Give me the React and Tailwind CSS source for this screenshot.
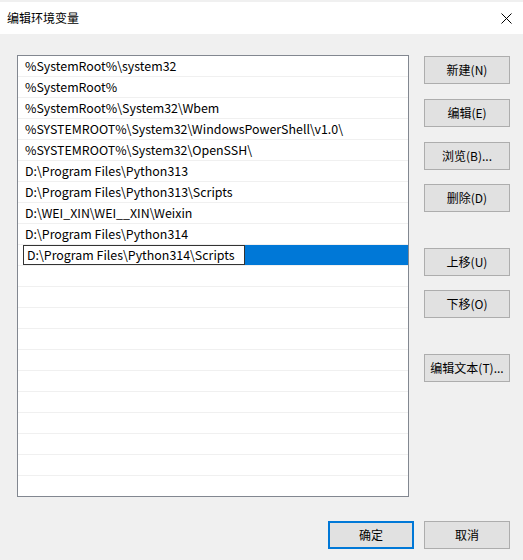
import React from 'react'

const paths = [
  '%SystemRoot%\\system32',
  '%SystemRoot%',
  '%SystemRoot%\\System32\\Wbem',
  '%SYSTEMROOT%\\System32\\WindowsPowerShell\\v1.0\\',
  '%SYSTEMROOT%\\System32\\OpenSSH\\',
  'D:\\Program Files\\Python313',
  'D:\\Program Files\\Python313\\Scripts',
  'D:\\WEI_XIN\\WEI__XIN\\Weixin',
  'D:\\Program Files\\Python314',
]

const editing = 'D:\\Program Files\\Python314\\Scripts'

const font = { fontFamily: '"Noto Sans CJK SC", "Noto Sans", sans-serif' }

const Button = ({ children, className = '', primary }) => (
  <button
    type="button"
    className={`w-[86px] h-[28px] text-[12px] text-black bg-[#e1e1e1] ${
      primary ? 'border-2 border-[#0078d7]' : 'border border-[#adadad]'
    } ${className}`}
  >
    {children}
  </button>
)

export default function App() {
  const blanks = Array.from({ length: 11 })

  return (
    <div className="w-[523px] h-[560px] bg-[#f0f0f0] flex flex-col overflow-hidden" style={font}>
      {/* title bar */}
      <div className="mt-[2px] h-[32px] bg-white flex items-center justify-between pl-[7px] pr-[10px] shrink-0">
        <span className="text-[12px] text-black">编辑环境变量</span>
        <svg width="11" height="11" viewBox="0 0 11 11" className="mr-[1px]">
          <path d="M0.5 0.5 L10.5 10.5 M10.5 0.5 L0.5 10.5" stroke="#000" strokeWidth="1" />
        </svg>
      </div>

      <div className="flex pt-[21px] pl-[17px]">
        {/* path list */}
        <div className="w-[392px] h-[442px] border border-[#828790] bg-white overflow-hidden">
          {paths.map((p) => (
            <div key={p} className="h-[21px] border-b border-[#f0f0f0] flex items-center pl-[7px] text-[12.4px] text-black">
              {p}
            </div>
          ))}
          <div className="h-[21px] border-b border-[#f0f0f0] flex items-stretch pl-[5px] bg-white">
            <div className="w-[222px] border border-[#333] bg-white flex items-center pl-[3px] text-[12.4px] text-black">
              {editing}
            </div>
            <div className="flex-1 bg-[#0078d7]" />
          </div>
          {blanks.map((_, i) => (
            <div key={i} className="h-[21px] border-b border-[#f0f0f0]" />
          ))}
        </div>

        {/* side buttons */}
        <div className="flex flex-col ml-[15px] pt-[1px]">
          <Button>新建(N)</Button>
          <Button className="mt-[15px]">编辑(E)</Button>
          <Button className="mt-[15px]">浏览(B)...</Button>
          <Button className="mt-[14px]">删除(D)</Button>
          <Button className="mt-[36px]">上移(U)</Button>
          <Button className="mt-[14px]">下移(O)</Button>
          <Button className="mt-[36px]">编辑文本(T)...</Button>
        </div>
      </div>

      {/* dialog buttons */}
      <div className="flex justify-end gap-[10px] pr-[13px] mt-[24px]">
        <Button primary>确定</Button>
        <Button>取消</Button>
      </div>
    </div>
  )
}
